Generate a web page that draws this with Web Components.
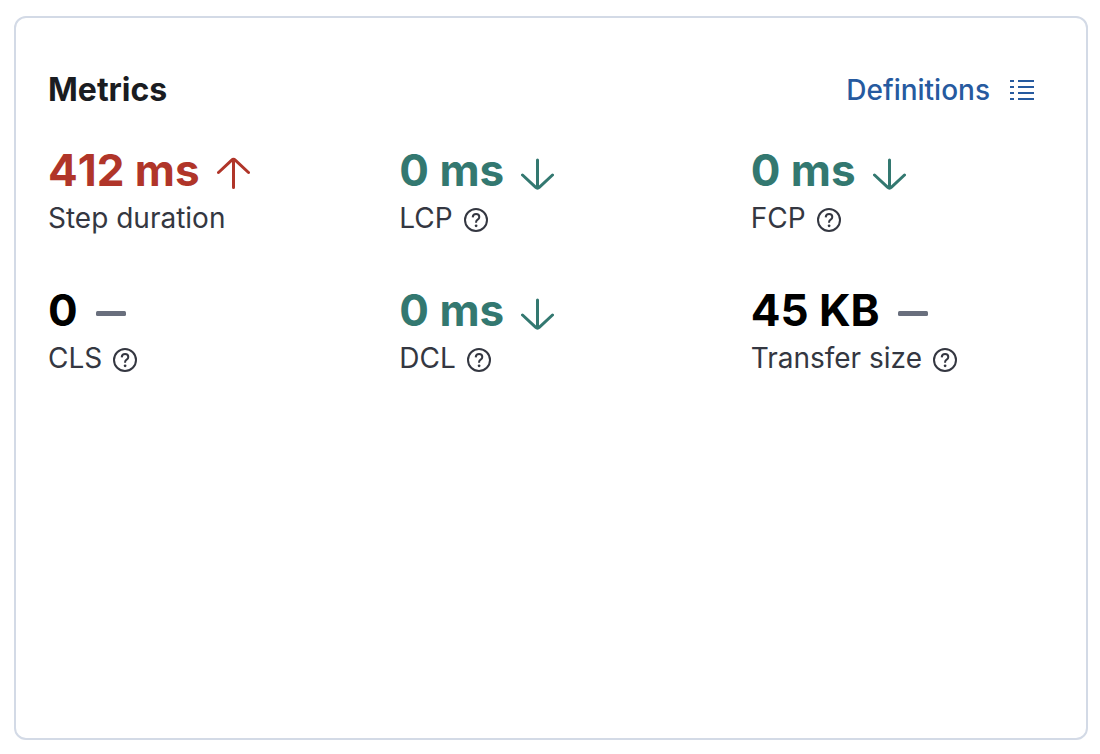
<!DOCTYPE html>
<html lang="en">
<head>
<meta charset="utf-8">
<title>Metrics</title>
<style>
  body {
    margin: 0;
    background: #fff;
    font-family: Inter, "Liberation Sans", sans-serif;
    color: #343741;
  }
</style>
</head>
<body>
<metrics-panel heading="Metrics">
  <definitions-button slot="action">Definitions</definitions-button>
  <metric-stat trend="up" label="Step duration">412 ms</metric-stat>
  <metric-stat trend="down" label="LCP" help>0 ms</metric-stat>
  <metric-stat trend="down" label="FCP" help>0 ms</metric-stat>
  <metric-stat trend="flat" label="CLS" help>0</metric-stat>
  <metric-stat trend="down" label="DCL" help>0 ms</metric-stat>
  <metric-stat trend="flat" label="Transfer size" help>45 KB</metric-stat>
</metrics-panel>

<script>
class MetricsPanel extends HTMLElement {
  connectedCallback() {
    this.attachShadow({ mode: 'open' }).innerHTML = `
      <style>
        :host {
          display: flex;
          flex-direction: column;
          box-sizing: border-box;
          min-height: calc(100vh - 30px);
          margin: 16px 12px 14px 14px;
          padding: 32px;
          border: 2px solid #d3dae6;
          border-radius: 12px;
        }
        header {
          display: flex;
          align-items: center;
          justify-content: space-between;
          height: 80px;
        }
        h2 { margin: 0; font-size: 32px; line-height: 40px; font-weight: 700; color: #1a1c21; }
        .grid {
          display: grid;
          grid-template-columns: repeat(3, minmax(0, 1fr));
          gap: 36px 48px;
          padding-top: 12px;
        }
      </style>
      <header><h2></h2><slot name="action"></slot></header>
      <div class="grid"><slot></slot></div>`;
    this.shadowRoot.querySelector('h2').textContent = this.getAttribute('heading');
  }
}

class DefinitionsButton extends HTMLElement {
  connectedCallback() {
    this.attachShadow({ mode: 'open' }).innerHTML = `
      <style>
        :host { display: block; }
        button {
          display: flex;
          align-items: center;
          gap: 16px;
          height: 64px;
          padding: 0 16px;
          border: 0;
          background: none;
          font: 500 28px/40px Inter, "Liberation Sans", sans-serif;
          color: #265a9f;
          cursor: pointer;
        }
        svg { display: block; width: 32px; height: 32px; }
      </style>
      <button type="button"><span><slot></slot></span>
        <svg viewBox="0 0 32 32" fill="currentColor" aria-hidden="true">
          <path d="M4 6h4v2H4zM12 6h16v2H12zM4 12h4v2H4zM12 12h16v2H12zM4 18h4v2H4zM12 18h16v2H12zM4 24h4v2H4zM12 24h16v2H12z"/>
        </svg>
      </button>`;
  }
}

const TRENDS = {
  up: { color: '#b03529', title: 'Increased', path: '<path d="M16.500 30.500V3M1.500 15.500 14.500 3.300Q16.500 1.500 18.500 3.300L31.500 15.500"/>' },
  down: { color: '#337870', title: 'Decreased', path: '<path d="M16.500 3V31M1.500 18 14.500 30.200Q16.500 32 18.500 30.200L31.500 18"/>' },
  flat: { color: '#000', title: 'Unchanged', path: '<rect x="1" y="14" width="30" height="5" rx="1.500" fill="#696f7d" stroke="none"/>' }
};

class MetricStat extends HTMLElement {
  connectedCallback() {
    const trend = TRENDS[this.getAttribute('trend')];
    this.attachShadow({ mode: 'open' }).innerHTML = `
      <style>
        :host { display: block; }
        .value {
          display: flex;
          align-items: center;
          gap: 17px;
          font-size: 44px;
          line-height: 56px;
          font-weight: 700;
          font-kerning: none;
          color: ${trend.color};
        }
        .value svg { width: 33px; height: 33px; margin-top: 6px; }
        .label {
          display: flex;
          align-items: flex-start;
          gap: 11px;
          height: 48px;
          font-size: 28px;
          line-height: 40px;
        }
        .label help-tip { margin-top: 10px; }
        svg { display: block; flex: none; }
      </style>
      <div class="value"><span><slot></slot></span>
        <svg viewBox="0 0 33 33" fill="none" stroke="currentColor" stroke-width="3" stroke-linecap="round" role="img" aria-label="${trend.title}">${trend.path}</svg>
      </div>
      <div class="label"><span class="name"></span>${this.hasAttribute('help') ? '<help-tip></help-tip>' : ''}</div>`;
    this.shadowRoot.querySelector('.name').textContent = this.getAttribute('label');
  }
}

class HelpTip extends HTMLElement {
  connectedCallback() {
    this.attachShadow({ mode: 'open' }).innerHTML = `
      <style>
        :host { display: block; color: #343741; }
        svg { display: block; width: 24px; height: 24px; }
      </style>
      <svg viewBox="0 0 24 24" fill="none" stroke="currentColor" stroke-width="2" role="img" aria-label="Help">
        <circle cx="12" cy="12" r="11"/>
        <path d="M8.700 9.300C8.900 7.200 10.200 6.100 12.100 6.100C14 6.100 15.300 7.300 15.300 8.900C15.300 10.200 14.600 10.900 13.600 11.600C12.500 12.300 12.100 12.900 12.100 14V14.700"/>
        <circle cx="12.100" cy="17.800" r="1.400" fill="currentColor" stroke="none"/>
      </svg>`;
  }
}

customElements.define('help-tip', HelpTip);
customElements.define('metric-stat', MetricStat);
customElements.define('definitions-button', DefinitionsButton);
customElements.define('metrics-panel', MetricsPanel);
</script>
</body>
</html>
